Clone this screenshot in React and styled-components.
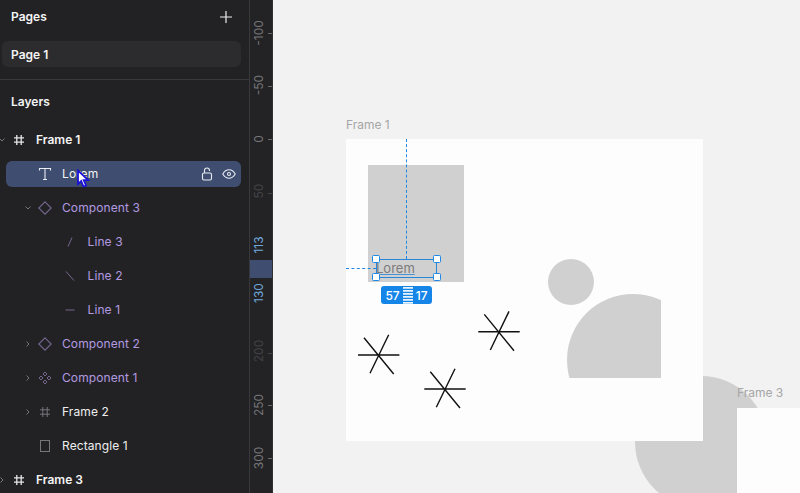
import React from "react";
import styled, { createGlobalStyle } from "styled-components";

const Global = createGlobalStyle`
  html, body { margin: 0; padding: 0; background: #f2f2f2; overflow: hidden; }
  #root { width: 800px; height: 493px; }
  * { box-sizing: border-box; }
`;

const Shell = styled.div`
  position: relative;
  display: flex;
  width: 800px;
  height: 493px;
  overflow: hidden;
  font-family: Inter, "Noto Sans", sans-serif;
`;

const Sidebar = styled.aside`
  width: 250px;
  flex: none;
  background: #222225;
  border-right: 1px solid #39393c;
  display: flex;
  flex-direction: column;
  overflow: hidden;
`;

const SectionHead = styled.div`
  height: ${(p) => p.$h}px;
  flex: none;
  display: flex;
  align-items: center;
  justify-content: space-between;
  padding: 0 16px 0 11px;
  color: #f4f4f4;
  font-size: 12px;
  font-weight: 600;
`;

const PageItem = styled.div`
  height: 26px;
  flex: none;
  margin: 8px 8px 0 2px;
  padding-left: 9px;
  display: flex;
  align-items: center;
  border-radius: 6px;
  background: #2c2c2e;
  color: #f4f4f4;
  font-size: 12px;
  font-weight: 600;
`;

const Divider = styled.div`
  height: 1px;
  flex: none;
  margin-top: 12px;
  background: #3a3a3d;
`;

const Tree = styled.div`
  display: flex;
  flex-direction: column;
  gap: 8px;
  margin-top: 4px;
`;

const Row = styled.div`
  position: relative;
  height: 26px;
  flex: none;
  display: flex;
  align-items: center;
  margin-right: 8px;
  margin-left: ${(p) => (p.$selected ? 6 : 0)}px;
  padding-left: ${(p) => p.$level * 25.5 - (p.$selected ? 6 : 0)}px;
  padding-right: 5px;
  border-radius: 6px;
  background: ${(p) => (p.$selected ? "#3f4e70" : "transparent")};
`;

const ChevronSlot = styled.span`
  width: 12px;
  flex: none;
  display: flex;
  margin-left: -2px;
  color: #77777b;
`;

const IconSlot = styled.span`
  width: 16px;
  height: 16px;
  flex: none;
  margin-left: 1px;
  display: flex;
  align-items: center;
  justify-content: center;
  color: ${(p) => p.$color};
`;

const Label = styled.span`
  margin-left: ${(p) => (p.$bold ? 9 : 9.5)}px;
  flex: 1;
  font-size: 12px;
  line-height: 16px;
  white-space: nowrap;
  font-weight: ${(p) => (p.$bold ? 600 : 400)};
  letter-spacing: ${(p) => (p.$bold ? 0 : 0.1)}px;
  color: ${(p) => p.$color};
`;

const RowActions = styled.span`
  display: flex;
  align-items: center;
  gap: 9px;
  color: #e8ebf2;
`;

const Cursor = styled.svg`
  position: absolute;
  left: 76px;
  top: 169px;
`;

const Ruler = styled.div`
  position: relative;
  width: 23px;
  flex: none;
  background: #232326;
  border-right: 1px solid #303033;
`;

const RulerLabel = styled.span`
  position: absolute;
  left: 0;
  width: 17px;
  top: ${(p) => p.$y}px;
  transform: translateY(-50%) rotate(180deg);
  writing-mode: vertical-rl;
  display: flex;
  align-items: center;
  justify-content: center;
  font-size: 12px;
  line-height: 17px;
  color: ${(p) => p.$color};
`;

const RulerTick = styled.span`
  position: absolute;
  left: 18px;
  top: ${(p) => p.$y}px;
  width: 4px;
  height: 1px;
  background: ${(p) => p.$color};
`;

const RulerMark = styled.div`
  position: absolute;
  left: 0;
  top: 260px;
  width: 22px;
  height: 18px;
  background: #3f4e70;
`;

const Canvas = styled.main`
  position: relative;
  flex: 1;
  background: #f2f2f2;
  overflow: hidden;
`;

const FrameLabel = styled.span`
  position: absolute;
  left: ${(p) => p.$x}px;
  top: ${(p) => p.$y}px;
  font-size: 12px;
  line-height: 16px;
  color: #a6a6a6;
`;

const Frame = styled.div`
  position: absolute;
  left: ${(p) => p.$x}px;
  top: ${(p) => p.$y}px;
  width: ${(p) => p.$w}px;
  height: ${(p) => p.$h}px;
  background: #fdfdfd;
`;

const GreyRect = styled.div`
  position: absolute;
  left: 22px;
  top: 26px;
  width: 96px;
  height: 117px;
  background: #d0d0d0;
`;

const GreyCircle = styled.div`
  position: absolute;
  left: ${(p) => p.$x}px;
  top: ${(p) => p.$y}px;
  width: ${(p) => p.$d}px;
  height: ${(p) => p.$d}px;
  border-radius: 50%;
  background: #d0d0d0;
`;

const ClipGroup = styled.div`
  position: absolute;
  left: 220.5px;
  top: 155px;
  width: 94px;
  height: 84px;
  overflow: hidden;
`;

const Stars = styled.svg`
  position: absolute;
  left: 0;
  top: 0;
`;

const LoremText = styled.span`
  position: absolute;
  left: 30px;
  top: 121px;
  font-size: 13px;
  line-height: 16px;
  color: #7b7b7b;
  text-decoration: underline;
  text-decoration-color: #4b93d6;
`;

const GuideV = styled.div`
  position: absolute;
  left: 60px;
  top: 0;
  height: 120px;
  border-left: 1px dashed #1f88e5;
`;

const GuideH = styled.div`
  position: absolute;
  left: 0;
  top: 129px;
  width: 30px;
  border-top: 1px dashed #1f88e5;
`;

const SelectBox = styled.div`
  position: absolute;
  left: 30px;
  top: 120px;
  width: 61px;
  height: 19px;
  border: 1.5px solid #2a86d8;
`;

const Handle = styled.span`
  position: absolute;
  width: 8px;
  height: 8px;
  background: #fff;
  border: 1.5px solid #1f88e5;
  border-radius: 1.5px;
  left: ${(p) => (p.$right ? 56 : -5)}px;
  top: ${(p) => (p.$bottom ? 13 : -5)}px;
`;

const SizeBadge = styled.div`
  position: absolute;
  left: 35px;
  top: 147px;
  width: 51px;
  height: 18px;
  border-radius: 3px;
  background: #1685e8;
  color: #fff;
  font-size: 12px;
  font-weight: 500;
  display: flex;
  align-items: center;
  justify-content: center;
  gap: 3px;
`;

const Hash = ({ color = "currentColor", w = 1.3 }) => (
  <svg width="12" height="12" viewBox="0 0 12 12" fill="none" stroke={color} strokeWidth={w}>
    <path d="M3.8 1v10M8.2 1v10M1 3.8h10M1 8.2h10" />
  </svg>
);
const TextIcon = () => (
  <svg width="14" height="14" viewBox="0 0 14 14" fill="none" stroke="currentColor" strokeWidth="1.1">
    <path d="M1.5 3.5V1.5h11v2M7 1.5v11M5 12.5h4" />
  </svg>
);
const Diamond = () => (
  <svg width="14" height="14" viewBox="0 0 14 14" fill="none" stroke="currentColor" strokeWidth="1.1">
    <path d="M7 .8 13.2 7 7 13.2.8 7z" />
  </svg>
);
const Components = () => (
  <svg width="14" height="14" viewBox="0 0 14 14" fill="none" stroke="currentColor" strokeWidth="1">
    <path d="M7 1l2 2-2 2-2-2zM7 9l2 2-2 2-2-2zM3 5l2 2-2 2-2-2zM11 5l2 2-2 2-2-2z" />
  </svg>
);
const LineIcon = ({ d }) => (
  <svg width="12" height="12" viewBox="0 0 12 12" fill="none" stroke="currentColor" strokeWidth="1">
    <path d={d} />
  </svg>
);
const RectIcon = () => (
  <svg width="12" height="12" viewBox="0 0 12 12" fill="none" stroke="currentColor" strokeWidth="1">
    <rect x="1.5" y=".5" width="9" height="11" />
  </svg>
);
const Chevron = ({ open }) => (
  <svg width="8" height="8" viewBox="0 0 8 8" fill="none" stroke="currentColor" strokeWidth="1">
    <path d={open ? "M1.5 2.5 4 5l2.5-2.5" : "M2.5 1.5 5 4 2.5 6.5"} />
  </svg>
);

const purple = "#b39ae0";
const iconPurple = "#75668f";

const layers = [
  { level: 0, chevron: "open", icon: <Hash color="#e6e6e6" />, iconColor: "#e6e6e6", label: "Frame 1", color: "#f4f4f4", bold: true },
  { level: 1, icon: <TextIcon />, iconColor: "#e8ebf2", label: "Lorem", color: "#f4f4f4", selected: true },
  { level: 1, chevron: "open", icon: <Diamond />, iconColor: iconPurple, label: "Component 3", color: purple },
  { level: 2, icon: <LineIcon d="M8 1.5 4 10.5" />, iconColor: iconPurple, label: "Line 3", color: purple },
  { level: 2, icon: <LineIcon d="M2 1.5 10 10.5" />, iconColor: iconPurple, label: "Line 2", color: purple },
  { level: 2, icon: <LineIcon d="M1.5 6h9" />, iconColor: iconPurple, label: "Line 1", color: purple },
  { level: 1, chevron: "closed", icon: <Diamond />, iconColor: iconPurple, label: "Component 2", color: purple },
  { level: 1, chevron: "closed", icon: <Components />, iconColor: iconPurple, label: "Component 1", color: purple },
  { level: 1, chevron: "closed", icon: <Hash color="#77777b" w={1} />, iconColor: "#77777b", label: "Frame 2", color: "#eeeeee" },
  { level: 1, icon: <RectIcon />, iconColor: "#77777b", label: "Rectangle 1", color: "#eeeeee" },
  { level: 0, chevron: "closed", icon: <Hash color="#e6e6e6" />, iconColor: "#e6e6e6", label: "Frame 3", color: "#f4f4f4", bold: true },
];

const rulerLabels = [
  ["-100", 33, "#77777a"],
  ["-50", 85, "#77777a"],
  ["0", 139, "#77777a"],
  ["50", 191, "#444447"],
  ["113", 245, "#6fa8da"],
  ["130", 293, "#6fa8da"],
  ["200", 351, "#444447"],
  ["250", 405, "#77777a"],
  ["300", 458, "#77777a"],
];
const ticks = [
  [33, "#6a6a6d"],
  [86, "#6a6a6d"],
  [139, "#6a6a6d"],
  [193, "#444447"],
  [353, "#444447"],
  [405, "#6a6a6d"],
  [458, "#6a6a6d"],
];

const star = (cx, cy) =>
  `M${cx - 20.7} ${cy}H${cx + 20.7}M${cx - 14.7} ${cy - 17.3}L${cx + 15} ${cy + 19}M${cx + 10} ${cy - 20.3}L${cx - 8.7} ${cy + 18.3}`;

export default function App() {
  return (
    <Shell>
      <Global />
      <Sidebar>
        <SectionHead $h={33}>
          Pages
          <svg width="14" height="14" viewBox="0 0 14 14" fill="none" stroke="#eeeeee" strokeWidth="1.2">
            <path d="M7 1v12M1 7h12" />
          </svg>
        </SectionHead>
        <PageItem>Page 1</PageItem>
        <Divider />
        <SectionHead $h={43}>Layers</SectionHead>
        <Tree>
          {layers.map((l) => (
            <Row key={l.label} $level={l.level} $selected={l.selected}>
              <ChevronSlot>{l.chevron && <Chevron open={l.chevron === "open"} />}</ChevronSlot>
              <IconSlot $color={l.iconColor}>{l.icon}</IconSlot>
              <Label $color={l.color} $bold={l.bold}>{l.label}</Label>
              {l.selected && (
                <RowActions>
                  <svg width="12" height="14" viewBox="0 0 12 14" fill="none" stroke="currentColor" strokeWidth="1.1">
                    <rect x="1.5" y="6" width="9" height="7" rx="1.5" />
                    <path d="M3.5 6V3.5a2.5 2.5 0 0 1 5 0V4" />
                  </svg>
                  <svg width="14" height="10" viewBox="0 0 14 10" fill="none" stroke="currentColor" strokeWidth="1.1">
                    <path d="M.8 5C2.5 2 4.5.8 7 .8S11.500 2 13.200 5C11.500 8 9.500 9.200 7 9.200S2.500 8 .8 5z" />
                    <circle cx="7" cy="5" r="1.5" />
                  </svg>
                </RowActions>
              )}
            </Row>
          ))}
        </Tree>
      </Sidebar>
      <Ruler>
        <RulerMark />
        {rulerLabels.map(([t, y, c]) => (
          <RulerLabel key={t} $y={y} $color={c}>{t}</RulerLabel>
        ))}
        {ticks.map(([y, c]) => (
          <RulerTick key={y} $y={y} $color={c} />
        ))}
      </Ruler>
      <Canvas>
        <GreyCircle $x={362} $y={376} $d={132} />
        <FrameLabel $x={73} $y={117}>Frame 1</FrameLabel>
        <Frame $x={73} $y={139} $w={357} $h={302}>
          <GreyRect />
          <GreyCircle $x={202} $y={119.5} $d={46} />
          <ClipGroup>
            <GreyCircle $x={0} $y={0} $d={132} />
          </ClipGroup>
          <Stars width="357" height="302" viewBox="346 139 357 302" fill="none" stroke="#111" strokeWidth="1.4">
            <path d={star(499, 331.7)} />
            <path d={star(378.7, 355)} />
            <path d={star(445, 389)} />
          </Stars>
          <LoremText>Lorem</LoremText>
          <GuideV />
          <GuideH />
          <SelectBox>
            <Handle />
            <Handle $right />
            <Handle $bottom />
            <Handle $right $bottom />
          </SelectBox>
          <SizeBadge>
            57
            <svg width="10" height="18" viewBox="0 0 10 18" fill="#fff" fillOpacity=".9">
              <path d="M0 1h10v1.800H0zM0 4h10v1.800H0zM0 7h10v1.800H0zM0 10h10v1.800H0zM0 13h10v1.800H0zM0 16h10v1.800H0z" />
            </svg>
            17
          </SizeBadge>
        </Frame>
        <FrameLabel $x={464} $y={385}>Frame 3</FrameLabel>
        <Frame $x={464} $y={408} $w={63} $h={85} />
      </Canvas>
      <Cursor width="14" height="20" viewBox="0 0 14 20">
        <path d="M2 1.5V15l3.2-3 2.3 5.5 2.5-1-2.300-5.300h4.500z" fill="#fff" stroke="#1a10d8" strokeWidth="1.8" />
      </Cursor>
    </Shell>
  );
}
